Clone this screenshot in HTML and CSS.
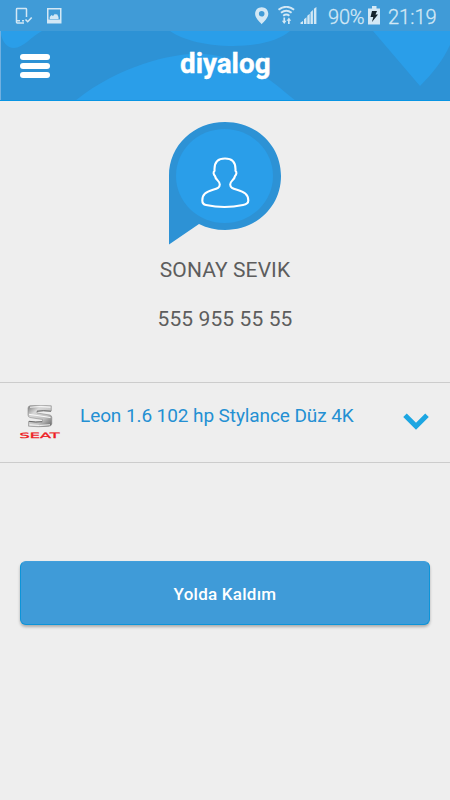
FILE: index.html
```html
<!DOCTYPE html>
<html lang="tr">
<head>
<meta charset="utf-8">
<title>diyalog</title>
<link rel="stylesheet" href="styles.css">
</head>
<body>
<div class="status">
  <svg class="status-left" width="50" height="20" viewBox="15 6 50 20" fill="none" stroke="#d3e8f5">
    <path d="M26.500 17V9.200q0-.7-.7-.7h-8.600q-.7 0-.7.7v13.100q0 .7.700.7H24M17 20.700h3M22 20.700h2" stroke-width="1.500"/>
    <path d="M25.500 19.500l2.200 2.200 4-4.200" stroke-width="1.600"/>
    <path d="M47 8h14.500v15.500H47z" fill="#d3e8f5" stroke="none"/>
    <path d="M48.500 9.500h11.500v10H48.500z" fill="#409bd7" stroke="none"/>
    <path d="M49.700 19v-2l1.800-2 1.500 1 2-2.300 1 1 1-.7 1.500 3V19z" fill="#d3e8f5" stroke="none"/>
  </svg>
  <svg class="status-icons" width="62" height="20" viewBox="255 6 62 20" fill="#d3e8f5">
    <path fill-rule="evenodd" d="M261.700 7.300c-3.800 0-6.600 2.800-6.600 6.500 0 4 4 7.500 6.600 10.500 2.600-3 6.600-6.500 6.600-10.500 0-3.700-2.800-6.500-6.600-6.500zm0 3.600a2.800 2.800 0 1 1 0 5.600 2.800 2.800 0 0 1 0-5.600z"/>
    <path d="M278.500 9.800q7.700-6 15.600 0M281 12.800q5.300-4.300 10.600 0M283.200 15.700q3.100-2.500 6.200 0" fill="none" stroke="#d3e8f5" stroke-width="1.900"/>
    <path d="M283.400 17.500h1.700v3.300h1.400l-2.300 3.200-2.300-3.200h1.500zM288 24h1.700v-3.300h1.500l-2.300-3.200-2.300 3.200h1.400z"/>
    <path d="M300.500 22.500l2.500-1.500V24h-2.500zM304 19.300l2.500-2v6.700H304zM307.300 15.800l2.400-2V24h-2.400zM310.500 12.300l2.400-2.300v14h-2.400zM313.900 8.800l2.500-1.800v17h-2.500z"/>
  </svg>
  <span class="battery-level">90%</span>
  <svg class="battery" width="12" height="19" viewBox="0 0 12 19">
    <path d="M4 0h4.500v2.500H12V18.500H0V2.500h4z" fill="#d3e8f5"/>
    <path d="M4 5h5L7.500 8.500H10L4 16l1.300-5H2.500z" fill="#14232d"/>
  </svg>
  <span class="clock">21:19</span>
</div>
<header class="header">
  <svg class="pattern" width="450" height="69" viewBox="0 31 450 69">
    <path fill="#2a9ee9" d="M1 31H42C32 36 23 48 14 48 7 48 3 42 1 35zM75 101C122 63 179 52 204 54 250 57 280 89 296 101zM170 31C197 50 266 52 290 31zM373 31H450V45C443 60 433 73 420 86z"/>
    <path fill="#72b0e0" d="M0 31h1v70H0z"/>
  </svg>
  <button class="menu" aria-label="Menü"><i></i><i></i><i></i></button>
  <svg class="brand" width="92" height="34" viewBox="0 0 92 34">
    <text x="0" y="24.200" textLength="90.500" lengthAdjust="spacingAndGlyphs">diyalog</text>
  </svg>
</header>
<main>
  <section class="profile">
    <svg width="112" height="124" viewBox="169 122 112 124">
      <path d="M169 176C169 145 194 122 225 122s56 23 56 54-25 54-56 54c-9 0-18-2-26-6l-30 20.500z" fill="#2d92d5"/>
      <ellipse cx="224.500" cy="176" rx="48.500" ry="47" fill="#2a9ee9"/>
      <path d="M225 158.500C218 158.500 214.500 162 214.500 169V171C213 172 213.500 174.500 215 176 215.500 180 220 181 219.800 184.500 219.700 187.800 217.500 188.500 213 189.800 206 192 202.300 194 202.300 200.500 202.300 203.500 203.500 204.600 206 205 217 207.300 232 207.300 243 205 247 204.300 248.300 203 248.300 200.500 248.300 194 244 192 237 189.800 232.500 188.500 230.300 187.800 230.200 184.500 230 181 234.500 180 235 176 236.500 174.500 237 172 235.500 171V169C235.500 162 232 158.500 225 158.500Z" fill="none" stroke="#fff" stroke-width="2.100" stroke-linejoin="round"/>
    </svg>
    <p class="name">SONAY SEVIK</p>
    <p class="phone">555 955 55 55</p>
  </section>
  <section class="car">
    <svg class="seat" width="42" height="36" viewBox="0 0 42 36">
      <defs><linearGradient id="metal" x1="0" y1="0" x2="1" y2="1"><stop offset="0" stop-color="#777"/><stop offset=".3" stop-color="#d8d8d8"/><stop offset=".65" stop-color="#c0c0c0"/><stop offset="1" stop-color="#606060"/></linearGradient></defs>
      <path d="M11 .8Q21-.4 32.300 .8V6Q24 5 18 6V8L31 10Q32.800 10.500 32.800 12.500V19Q32.500 21 30 21.200 19 22.300 9.500 21.200V16.500Q16 17.800 23.500 17V14.500L11 12.500Q9 12 9 10V3Q9.200 1.200 11 .8Z" fill="url(#metal)" stroke="#8a8a8a" stroke-width=".6"/>
      <path d="M11 2.200Q21 1 31.500 2.200M10 9.300L31.500 12.500M10.500 19.800Q20 21 31 19.800" fill="none" stroke="#fafafa" stroke-width="1"/>
      <path d="M18 6.300Q24 5.300 32 6.300M10 16.300Q17 17.400 23 16.600" fill="none" stroke="#505050" stroke-width=".8"/>
      <text x="0.500" y="32.800" textLength="40" lengthAdjust="spacingAndGlyphs">SEAT</text>
    </svg>
    <span class="model">Leon 1.6 102 hp Stylance Düz 4K</span>
    <svg class="chevron" width="26" height="18" viewBox="0 0 26 18"><path d="M2 2.200L13 13.200 24 2.200" fill="none" stroke="#1ca6e2" stroke-width="5"/></svg>
  </section>
  <button class="action">Yolda Kaldım</button>
</main>
</body>
</html>
```
FILE: styles.css
```css
* { box-sizing: border-box; }
body { margin: 0; height: 800px; background: #eee; font-family: Roboto, sans-serif; overflow: hidden; }
button { border: 0; font-family: inherit; }
.status { height: 31px; background: #409bd7; display: flex; align-items: flex-start; padding: 6px 0 0 15px; color: #d3e8f5; }
.status > * { flex: none; }
.status-icons { margin-left: 190px; }
.battery-level { font-size: 20px; line-height: 22px; font-weight: 300; margin-left: 11px; width: 39px; white-space: nowrap; letter-spacing: -.2px; -webkit-text-stroke: .3px #d3e8f5; }
.battery { margin-left: 1px; }
.clock { font-size: 20px; line-height: 22px; font-weight: 300; margin-left: 8px; white-space: nowrap; -webkit-text-stroke: .3px #d3e8f5; }
.header { position: relative; height: 70px; background: #2d92d5; border-bottom: 1px solid #0794e3; display: flex; }
.pattern { position: absolute; inset: 0; height: 69px; }
.menu { position: relative; display: flex; flex-direction: column; gap: 3.500px; width: 31px; height: 24px; margin: 23px 0 0 20px; padding: 0; background: none; }
.menu i { flex: none; width: 30px; height: 5.500px; border-radius: 3px; background: #fff; }
.brand { position: relative; margin: 18px 0 0 129px; overflow: visible; }
.brand text { font: 700 28px Roboto, sans-serif; fill: #fff; stroke: #fff; stroke-width: .4px; }
.profile { height: 281px; padding-top: 21px; display: flex; flex-direction: column; align-items: center; color: #5d5d5d; }
.profile p { margin: 0; line-height: 26px; font-size: 21px; }
.profile .name { margin-top: 11px; letter-spacing: .1px; }
.profile .phone { margin-top: 23px; letter-spacing: .1px; }
.car { height: 81px; border: solid #ccc; border-width: 1px 0; display: flex; padding: 22px 21px 0 19px; }
.model { color: #2490d3; font-size: 19px; line-height: 23px; margin: -1px 0 0 19px; letter-spacing: -.09px; white-space: nowrap; }
.chevron { margin: 8px 0 0 auto; flex: none; }
.seat { flex: none; }
.seat text { font: 400 7.200px "DejaVu Sans", sans-serif; fill: #ed1b24; stroke: #ed1b24; stroke-width: .3px; }
.action { display: block; width: 410px; height: 64px; margin: 98px auto 0; padding-top: 2px; border: 1px solid #0c94d9; border-top-color: #419fdc; border-radius: 6px; background: #3f9bd8; color: #fff; font-size: 17px; font-weight: 500; letter-spacing: .25px; box-shadow: 0 2px 3px rgba(0,0,0,.28); }
```
